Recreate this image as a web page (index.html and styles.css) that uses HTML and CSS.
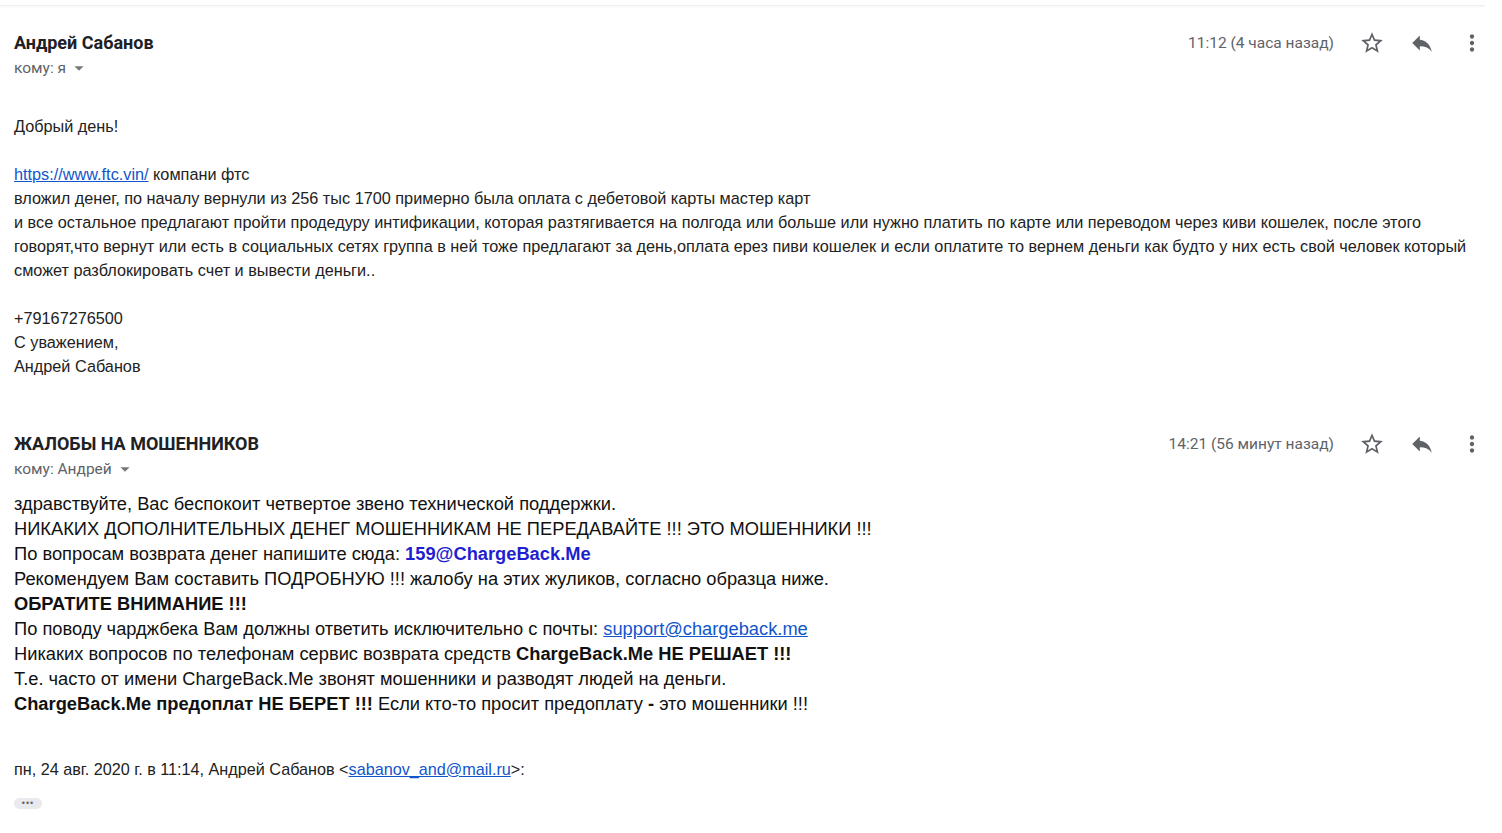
FILE: index.html
```html
<!DOCTYPE html>
<html lang="ru">
<head>
  <meta charset="UTF-8">
  <title>Письмо</title>
  <link rel="stylesheet" href="styles.css">
</head>
<body>
  <div class="topbar"></div>

  <div class="message">
    <div class="head">
      <div class="who">
        <div class="sender">Андрей Сабанов</div>
        <div class="to">кому: я <svg class="caret" viewBox="0 0 24 24"><path d="M7 10l5 5 5-5z"/></svg></div>
      </div>
      <div class="meta">
        <span class="time">11:12 (4 часа назад)</span>
        <span class="ico"><svg viewBox="0 0 24 24"><path d="M22 9.24l-7.19-.62L12 2 9.19 8.63 2 9.24l5.46 4.73L5.82 21 12 17.27 18.18 21l-1.63-7.03L22 9.24zM12 15.4l-3.76 2.27 1-4.28-3.32-2.88 4.38-.38L12 6.1l1.71 4.04 4.38.38-3.32 2.88 1 4.28L12 15.4z"/></svg></span>
        <span class="ico"><svg viewBox="0 0 24 24"><path d="M10 9V5l-7 7 7 7v-4.1c5 0 8.5 1.6 11 5.1-1-5-4-10-11-11z"/></svg></span>
        <span class="ico"><svg viewBox="0 0 24 24"><path d="M12 8c1.1 0 2-.9 2-2s-.9-2-2-2-2 .9-2 2 .9 2 2 2zm0 2c-1.1 0-2 .9-2 2s.9 2 2 2 2-.9 2-2-.9-2-2-2zm0 6c-1.1 0-2 .9-2 2s.9 2 2 2 2-.9 2-2-.9-2-2-2z"/></svg></span>
      </div>
    </div>
    <div class="body">
      Добрый день!<br>
      <br>
      <a href="#">https://www.ftc.vin/</a> компани фтс<br>
      вложил денег, по началу вернули из 256 тыс 1700 примерно была оплата с дебетовой карты мастер карт<br>
      и все остальное предлагают пройти продедуру интификации, которая разтягивается на полгода или больше или нужно платить по карте или переводом через киви кошелек, после этого<br>
      говорят,что вернут или есть в социальных сетях группа в ней тоже предлагают за день,оплата ерез пиви кошелек и если оплатите то вернем деньги как будто у них есть свой человек который<br>
      сможет разблокировать счет и вывести деньги..<br>
      <br>
      +79167276500<br>
      С уважением,<br>
      Андрей Сабанов
    </div>
  </div>

  <div class="message second">
    <div class="head">
      <div class="who">
        <div class="sender">ЖАЛОБЫ НА МОШЕННИКОВ</div>
        <div class="to">кому: Андрей <svg class="caret" viewBox="0 0 24 24"><path d="M7 10l5 5 5-5z"/></svg></div>
      </div>
      <div class="meta">
        <span class="time">14:21 (56 минут назад)</span>
        <span class="ico"><svg viewBox="0 0 24 24"><path d="M22 9.24l-7.19-.62L12 2 9.19 8.63 2 9.24l5.46 4.73L5.82 21 12 17.27 18.18 21l-1.63-7.03L22 9.24zM12 15.4l-3.76 2.27 1-4.28-3.32-2.88 4.38-.38L12 6.1l1.71 4.04 4.38.38-3.32 2.88 1 4.28L12 15.4z"/></svg></span>
        <span class="ico"><svg viewBox="0 0 24 24"><path d="M10 9V5l-7 7 7 7v-4.1c5 0 8.5 1.6 11 5.1-1-5-4-10-11-11z"/></svg></span>
        <span class="ico"><svg viewBox="0 0 24 24"><path d="M12 8c1.1 0 2-.9 2-2s-.9-2-2-2-2 .9-2 2 .9 2 2 2zm0 2c-1.1 0-2 .9-2 2s.9 2 2 2 2-.9 2-2-.9-2-2-2zm0 6c-1.1 0-2 .9-2 2s.9 2 2 2 2-.9 2-2-.9-2-2-2z"/></svg></span>
      </div>
    </div>
    <div class="body big">
      здравствуйте, Вас беспокоит четвертое звено технической поддержки.<br>
      НИКАКИХ ДОПОЛНИТЕЛЬНЫХ ДЕНЕГ МОШЕННИКАМ НЕ ПЕРЕДАВАЙТЕ !!! ЭТО МОШЕННИКИ !!!<br>
      По вопросам возврата денег напишите сюда: <b class="mail">159@ChargeBack.Me</b><br>
      Рекомендуем Вам составить ПОДРОБНУЮ !!! жалобу на этих жуликов, согласно образца ниже.<br>
      <b>ОБРАТИТЕ ВНИМАНИЕ !!!</b><br>
      По поводу чарджбека Вам должны ответить исключительно с почты: <a href="#">support@chargeback.me</a><br>
      Никаких вопросов по телефонам сервис возврата средств <b>ChargeBack.Me НЕ РЕШАЕТ !!!</b><br>
      Т.е. часто от имени ChargeBack.Me звонят мошенники и разводят людей на деньги.<br>
      <b>ChargeBack.Me предоплат НЕ БЕРЕТ !!!</b> Если кто-то просит предоплату <b>-</b> это мошенники !!!
    </div>
    <div class="quote">пн, 24 авг. 2020 г. в 11:14, Андрей Сабанов &lt;<a href="#">sabanov_and@mail.ru</a>&gt;:</div>
    <div class="more">•••</div>
  </div>
</body>
</html>
```

FILE: styles.css
```css
body {
  margin: 0;
  background: white;
  color: #222;
  font-family: "Liberation Sans", Arial, sans-serif;
}
.topbar {
  width: 1485px;
  height: 5px;
  border-bottom: 1px solid #eceff1;
  box-shadow: 0 1px 2px rgba(0, 0, 0, 0.04);
}
.message {
  padding: 27px 5px 0 14px;
}
.second {
  padding-top: 56px;
}
.head {
  display: flex;
  justify-content: space-between;
  align-items: flex-start;
}
.sender {
  font-family: Roboto, Arial, sans-serif;
  font-weight: bold;
  font-size: 18px;
  line-height: 20px;
  color: #202124;
}
.to {
  display: flex;
  align-items: center;
  margin-top: 4px;
  font-family: Roboto, Arial, sans-serif;
  font-size: 15.5px;
  line-height: 20px;
  color: #5f6368;
}
.caret {
  width: 22px;
  height: 22px;
  margin-left: 2px;
  fill: #777;
}
.meta {
  display: flex;
  align-items: center;
  height: 20px;
}
.time {
  font-family: Roboto, Arial, sans-serif;
  font-size: 15.5px;
  color: #5f6368;
  margin-right: 13px;
}
.ico {
  display: flex;
  justify-content: center;
  width: 50px;
}
.ico svg {
  width: 26px;
  height: 26px;
  fill: #5f6368;
}
.body {
  margin-top: 35px;
  font-size: 16.25px;
  line-height: 24px;
}
.big {
  margin-top: 11px;
  font-size: 18.3px;
  line-height: 25px;
  color: #111;
}
a {
  color: #15c;
}
.mail {
  color: #1f1fd0;
}
.quote {
  margin-top: 41px;
  font-size: 16.2px;
  line-height: 24px;
}
.more {
  display: inline-block;
  margin-top: 17px;
  width: 28px;
  height: 11px;
  border-radius: 6px;
  background: #e8eaed;
  color: #666;
  font-size: 9px;
  line-height: 11px;
  text-align: center;
  letter-spacing: 1px;
}
```
